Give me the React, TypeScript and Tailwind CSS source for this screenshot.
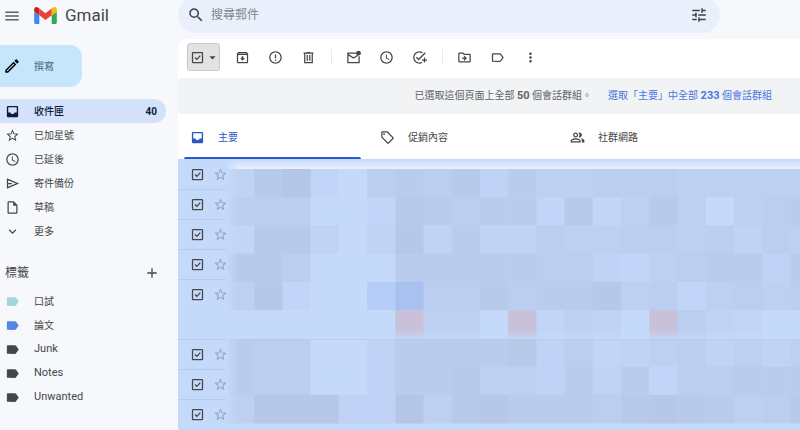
import React, { useState } from "react";
import type { ComponentType, ReactNode } from "react";
import {
  MdAccessTime,
  MdAdd,
  MdAddTask,
  MdArrowDropDown,
  MdErrorOutline,
  MdExpandMore,
  MdLabel,
  MdLabelOutline,
  MdMenu,
  MdMoreVert,
  MdOutlineArchive,
  MdOutlineDriveFileMove,
  MdOutlineEdit,
  MdOutlineInsertDriveFile,
  MdOutlinePeopleAlt,
  MdOutlineSell,
  MdSearch,
  MdStarBorder,
  MdTune,
} from "react-icons/md";

type Icon = ComponentType<{ className?: string }>;

const FONT = "font-['Roboto','Noto_Sans_CJK_TC',sans-serif]";

function GmailLogo() {
  return (
    <svg viewBox="52 42 88 66" className="h-[17px] w-[23px]" aria-hidden="true">
      <path fill="#4285f4" d="M58 108h14V74L52 59v43c0 3.32 2.69 6 6 6" />
      <path fill="#34a853" d="M120 108h14c3.32 0 6-2.69 6-6V59l-20 15" />
      <path fill="#fbbc04" d="M120 48v26l20-15v-8c0-7.42-8.47-11.65-14.4-7.2" />
      <path fill="#ea4335" d="M72 74V48l24 18 24-18v26L96 92" />
      <path fill="#c5221f" d="M52 51v8l20 15V48l-5.6-4.2c-5.94-4.45-14.4-.22-14.4 7.2" />
    </svg>
  );
}

function InboxIcon({ className }: { className?: string }) {
  return (
    <svg viewBox="0 0 24 24" className={className} fill="currentColor" fillRule="evenodd" aria-hidden="true">
      <path d="M5 3h14a2 2 0 0 1 2 2v14a2 2 0 0 1-2 2H5a2 2 0 0 1-2-2V5a2 2 0 0 1 2-2zm.2 2.200v8.300h3.600c.4 1.700 1.600 2.600 3.200 2.600s2.800-.9 3.200-2.600h3.600V5.200z" />
    </svg>
  );
}

function SendIcon({ className }: { className?: string }) {
  return (
    <svg viewBox="0 0 24 24" className={className} fill="none" stroke="currentColor" strokeWidth="2" aria-hidden="true">
      <path d="M4 5.300v13.400L20 12zM4 12h7" />
    </svg>
  );
}

function TrashIcon() {
  return (
    <svg viewBox="0 0 24 24" className="size-[15px]" fill="none" stroke="currentColor" strokeWidth="2" aria-hidden="true">
      <path d="M4 5h16M9 4h6M6 6v14h12V6M10 8v9M14 8v9" />
    </svg>
  );
}

function UnreadIcon() {
  return (
    <svg viewBox="0 0 24 24" className="size-[15px]" aria-hidden="true">
      <path fill="none" stroke="currentColor" strokeWidth="2" d="M16 5H3v15h18V10M3 7l9 6 7-4.500" />
      <circle cx="20" cy="5" r="3.800" fill="currentColor" />
    </svg>
  );
}

function CheckBox({ label, className }: { label: string; className?: string }) {
  const [on, setOn] = useState(true);
  return (
    <label className={`grid size-[15px] shrink-0 ${className ?? ""}`}>
      <input
        type="checkbox"
        aria-label={label}
        checked={on}
        onChange={() => setOn(!on)}
        className="size-[15px] cursor-pointer appearance-none [grid-area:1/1]"
      />
      <svg
        viewBox="0 0 24 24"
        className="pointer-events-none size-[15px] [grid-area:1/1]"
        fill="none"
        stroke="currentColor"
        strokeWidth="2"
        aria-hidden="true"
      >
        <rect x="4" y="4" width="16" height="16" rx="1" />
        {on && <path d="M8 12l3 3 5.500-6" />}
      </svg>
    </label>
  );
}

function NavItem({ icon: Glyph, text, count, active, tint }: {
  icon: Icon;
  text: string;
  count?: number;
  active?: boolean;
  tint?: string;
}) {
  return (
    <li>
      <a
        href="#"
        className={`flex h-6 items-center rounded-r-full pr-[9px] pl-[5px] ${
          active ? "bg-[#d3e1fb] font-medium text-[#0b1b3d]" : "text-[#444746]"
        }`}
      >
        <Glyph className={`mr-[14px] size-[15px] shrink-0 ${tint ?? ""}`} />
        <span className="flex-1">{text}</span>
        {count !== undefined && <span className="text-[10px] font-bold">{count}</span>}
      </a>
    </li>
  );
}

function Sidebar() {
  return (
    <aside className="w-[178px] shrink-0 pr-3 text-[10px]">
      <div className="flex h-[31px] items-center">
        <button aria-label="主選單" className="ml-[3px] text-[#5f6368]">
          <MdMenu className="size-[18px]" />
        </button>
        <a href="#" className="ml-[13px] flex items-center gap-2 text-[17px] text-[#444746]">
          <GmailLogo />
          <span>Gmail</span>
        </a>
      </div>
      <button className="mt-[14px] flex h-[42px] w-[82px] items-center gap-[13px] rounded-r-xl bg-[#c6e6fb] pl-[3px] text-[#4a6578]">
        <MdOutlineEdit className="size-[18px] text-black" />
        <span>撰寫</span>
      </button>
      <nav className="mt-3">
        <ul>
          <NavItem icon={InboxIcon} text="收件匣" count={40} active />
          <NavItem icon={MdStarBorder} text="已加星號" />
          <NavItem icon={MdAccessTime} text="已延後" />
          <NavItem icon={SendIcon} text="寄件備份" />
          <NavItem icon={MdOutlineInsertDriveFile} text="草稿" />
          <NavItem icon={MdExpandMore} text="更多" />
        </ul>
      </nav>
      <div className="mt-[18px] flex h-6 items-center justify-between pr-[6px] pl-[5px] text-[#444746]">
        <h2 className="text-[12px]">標籤</h2>
        <button aria-label="建立新標籤">
          <MdAdd className="size-[16px]" />
        </button>
      </div>
      <ul className="mt-1">
        <NavItem icon={MdLabel} text="口試" tint="text-[#a2d5e0]" />
        <NavItem icon={MdLabel} text="論文" tint="text-[#5484e4]" />
      </ul>
      <ul className="text-[11px]">
        <NavItem icon={MdLabel} text="Junk" />
        <NavItem icon={MdLabel} text="Notes" />
        <NavItem icon={MdLabel} text="Unwanted" />
      </ul>
    </aside>
  );
}

function SearchBar() {
  return (
    <form className="-mt-[3px] flex h-9 max-w-[542px] items-center rounded-full bg-[#e9f0fb] pr-3 pl-[9px] text-[#3c4043]">
      <button type="button" aria-label="搜尋">
        <MdSearch className="size-[18px]" />
      </button>
      <input
        type="search"
        aria-label="搜尋郵件"
        placeholder="搜尋郵件"
        className="ml-[6px] min-w-0 flex-1 bg-transparent text-[12px] outline-none placeholder:text-[#80858b]"
      />
      <button type="button" aria-label="顯示搜尋選項">
        <MdTune className="size-[18px]" />
      </button>
    </form>
  );
}

function ToolButton({ label, children }: { label: string; children: ReactNode }) {
  return (
    <button aria-label={label} className="flex h-7 w-[33px] items-center justify-center">
      {children}
    </button>
  );
}

function Divider() {
  return <span className="mr-[5px] ml-[6px] h-4 w-px bg-[#e8eaed]" />;
}

function Toolbar() {
  return (
    <div className="flex h-[39px] items-center pr-2 pb-[3px] pl-[9px] text-[#444746]">
      <div className="mr-[6px] flex h-7 w-[33px] items-center rounded-[3px] border border-[#c9c9c9] bg-[#e2e2e2] pl-[2px]">
        <CheckBox label="選取" />
        <button aria-label="選取選項">
          <MdArrowDropDown className="size-[15px]" />
        </button>
      </div>
      <ToolButton label="封存"><MdOutlineArchive className="size-[15px]" /></ToolButton>
      <ToolButton label="回報為垃圾郵件"><MdErrorOutline className="size-[15px]" /></ToolButton>
      <ToolButton label="刪除"><TrashIcon /></ToolButton>
      <Divider />
      <ToolButton label="標示為未讀取"><UnreadIcon /></ToolButton>
      <ToolButton label="延後"><MdAccessTime className="size-[15px]" /></ToolButton>
      <ToolButton label="新增至工作清單"><MdAddTask className="size-[15px]" /></ToolButton>
      <Divider />
      <ToolButton label="移至"><MdOutlineDriveFileMove className="size-[15px]" /></ToolButton>
      <ToolButton label="標籤"><MdLabelOutline className="size-[15px]" /></ToolButton>
      <ToolButton label="更多"><MdMoreVert className="size-[15px]" /></ToolButton>
    </div>
  );
}

function SelectionBanner() {
  return (
    <div className="flex h-9 items-center justify-end gap-4 rounded-l bg-[#f1f3f4] pt-px pr-7 text-[10px] whitespace-nowrap text-[#5f6368]">
      <span>
        已選取這個頁面上全部 <b className="text-[11px]">50</b> 個會話群組。
      </span>
      <a href="#" className="text-[#4b74e0]">
        選取「主要」中全部 <b className="text-[11px]">233</b> 個會話群組
      </a>
    </div>
  );
}

const TABS: { icon: Icon; text: string }[] = [
  { icon: InboxIcon, text: "主要" },
  { icon: MdOutlineSell, text: "促銷內容" },
  { icon: MdOutlinePeopleAlt, text: "社群網路" },
];

function Tabs() {
  return (
    <div role="tablist" className="flex h-[45px] text-[10px]">
      {TABS.map(({ icon: Glyph, text }, i) => (
        <button
          key={text}
          role="tab"
          aria-selected={i === 0}
          className={`flex w-[190px] flex-col pr-[7px] pl-[6px] ${i === 0 ? "text-[#2a56c6]" : "text-[#444746]"}`}
        >
          <span className="flex flex-1 items-center gap-[13px] pt-1 pl-[6px]">
            <Glyph className="size-[15px]" />
            {text}
          </span>
          <span className={`h-[2px] w-full rounded-t ${i === 0 ? "bg-[#2b5bc9]" : ""}`} />
        </button>
      ))}
    </div>
  );
}

const SHADES: Record<string, string> = {
  "0": "#c5d9fb",
  "1": "#c2d5f8",
  "2": "#c0d2f5",
  "3": "#bed0f2",
  "4": "#bccef0",
  "5": "#baccee",
  "6": "#b8caea",
  "7": "#b6c7e8",
  "8": "#b4c5e6",
  a: "#a9c1ef",
  b: "#b6cdf9",
  r: "#c8c1d9",
};

const MOSAIC = [
  "268104546253344433333",
  "444001654551613630345",
  "166202725224334434243",
  "664000555554421345525",
  "37100ba44645573413434",
  "000000r330r1320r42100",
  "544002555562412342323",
  "544002556332525144555",
  "377722836755546765346",
];

const CELL = 28.22;

function Mosaic() {
  return (
    <svg className="h-full w-full" viewBox="0 0 574 270" preserveAspectRatio="none" aria-hidden="true">
      <defs>
        <linearGradient id="top" x1="0" y1="0" x2="0" y2="1">
          <stop offset="0" stopColor="#cbdcfc" />
          <stop offset="1" stopColor="#eaf0fe" />
        </linearGradient>
        <linearGradient id="fade" x1="0" y1="0" x2="0" y2="1">
          <stop offset="0" stopColor="#c5d9fb" stopOpacity="0" />
          <stop offset="1" stopColor="#c5d9fb" stopOpacity="0.8" />
        </linearGradient>
        <linearGradient id="edge" x1="0" y1="0" x2="1" y2="0">
          <stop offset="0" stopColor="#c5d9fb" />
          <stop offset="1" stopColor="#c5d9fb" stopOpacity="0" />
        </linearGradient>
      </defs>
      <rect x="0" y="0" width="574" height="9" fill="url(#top)" />
      {MOSAIC.map((row, r) =>
        row.split("").map((shade, c) => (
          <rect
            key={`${r}-${c}`}
            x={c * CELL}
            y={9 + r * CELL}
            width={CELL + 0.5}
            height={CELL + 0.5}
            fill={SHADES[shade]}
          />
        )),
      )}
      <rect x="0" y="169" width="574" height="10" fill="url(#fade)" />
      <rect x="0" y="179" width="574" height="1" fill="#b5c7ea" opacity="0.6" />
      <rect x="0" y="0" width="12" height="270" fill="url(#edge)" />
    </svg>
  );
}

const ROWS = [false, false, false, false, true, false, false, false];

function MailList() {
  return (
    <div className="relative flex-1 bg-[#c5d9fb] pt-px">
      <ul>
        {ROWS.map((tall, i) => (
          <li
            key={i}
            className={`flex items-start border-b border-[#b8cbee] pt-[7px] pl-3 last:border-b-0 ${tall ? "h-[60px]" : "h-[30px]"}`}
          >
            <CheckBox label={`選取會話群組 ${i + 1}`} className="text-[#444746]" />
            <button aria-label="加上星號" className="ml-2 text-[#93a3bf]">
              <MdStarBorder className="size-[15px]" />
            </button>
          </li>
        ))}
      </ul>
      <div className="absolute top-px right-0 left-12 h-[270px]">
        <Mosaic />
      </div>
    </div>
  );
}

export default function App() {
  return (
    <div className={`flex min-h-screen overflow-hidden bg-[#f6f8fc] ${FONT}`}>
      <Sidebar />
      <main className="flex min-w-0 flex-1 flex-col">
        <SearchBar />
        <section className="mt-[6px] flex flex-1 flex-col overflow-hidden rounded-tl-lg bg-white">
          <Toolbar />
          <SelectionBanner />
          <Tabs />
          <MailList />
        </section>
      </main>
    </div>
  );
}
